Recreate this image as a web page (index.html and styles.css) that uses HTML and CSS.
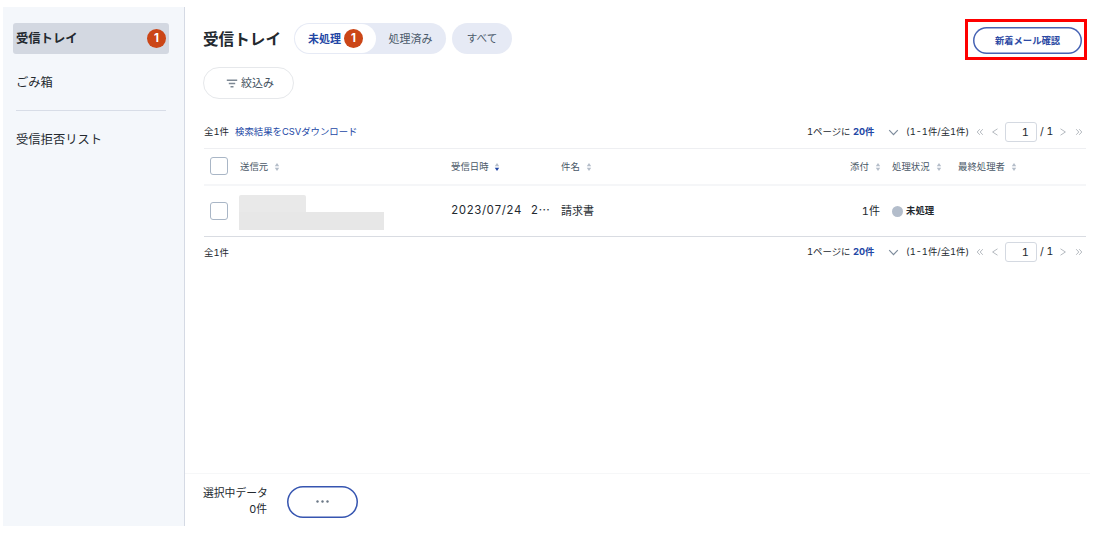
FILE: index.html
```html
<!DOCTYPE html>
<html lang="ja">
<head>
    <meta charset="UTF-8">
    <meta name="viewport" content="width=device-width, initial-scale=1.0">
    <title>受信トレイ</title>
    <link rel="stylesheet" href="styles.css">
</head>
<body>
    <svg class="sprite">
        <symbol id="sort" viewBox="0 0 6 10">
            <path fill="#b4bdc9" d="M3 1 L5.2 4.2 H0.8 Z"/>
            <path d="M3 9 L5.2 5.8 H0.8 Z"/>
        </symbol>
        <symbol id="chevron-down" viewBox="0 0 11 7">
            <path d="M1.2 1.2 L5.5 5.7 L9.8 1.2"/>
        </symbol>
        <symbol id="prev" viewBox="0 0 8 8">
            <path d="M6.5 0.8 L1.6 4 L6.5 7.2"/>
        </symbol>
        <symbol id="next" viewBox="0 0 8 8">
            <path d="M1.5 0.8 L6.4 4 L1.5 7.2"/>
        </symbol>
        <symbol id="first" viewBox="0 0 8 8">
            <path d="M3.8 1.2 L1.2 4 L3.8 6.8 M6.8 1.2 L4.2 4 L6.8 6.8"/>
        </symbol>
        <symbol id="last" viewBox="0 0 8 8">
            <path d="M1.2 1.2 L3.8 4 L1.2 6.8 M4.2 1.2 L6.8 4 L4.2 6.8"/>
        </symbol>
    </svg>
    <div class="container">
        <nav class="sidebar">
            <a class="menu active">受信トレイ<span class="badge">1</span></a>
            <a class="menu">ごみ箱</a>
            <hr>
            <a class="menu">受信拒否リスト</a>
        </nav>
        <main>
            <header>
                <h1>受信トレイ</h1>
                <div class="tabs">
                    <button class="tab selected">未処理<span class="badge">1</span></button>
                    <button class="tab">処理済み</button>
                </div>
                <button class="all">すべて</button>
                <div class="highlight">
                    <button class="check-mail">新着メール確認</button>
                </div>
            </header>
            <button class="filter">
                <svg width="12" height="9" viewBox="0 0 12 9"><path d="M0.8 1.2 H11.2 M2.8 4.5 H9.2 M4.5 7.8 H7.5"/></svg>
                絞込み
            </button>

            <div class="list-bar">
                <span class="total">全1件</span>
                <a class="csv">検索結果をCSVダウンロード</a>
                <div class="pager">
                    <span class="per">1ページに</span>
                    <b class="count">20件</b>
                    <svg class="select-arrow"><use href="#chevron-down"/></svg>
                    <span class="range">(1-1件/全1件)</span>
                    <svg class="first"><use href="#first"/></svg>
                    <svg class="prev"><use href="#prev"/></svg>
                    <span class="page">1</span>
                    <span class="pages">/ 1</span>
                    <svg class="next"><use href="#next"/></svg>
                    <svg class="last"><use href="#last"/></svg>
                </div>
            </div>

            <div class="table">
                <div class="row head">
                    <span class="checkbox"></span>
                    <span>送信元<svg class="sort"><use href="#sort"/></svg></span>
                    <span>受信日時<svg class="sort desc"><use href="#sort"/></svg></span>
                    <span>件名<svg class="sort"><use href="#sort"/></svg></span>
                    <span>添付<svg class="sort"><use href="#sort"/></svg></span>
                    <span>処理状況<svg class="sort"><use href="#sort"/></svg></span>
                    <span>最終処理者<svg class="sort"><use href="#sort"/></svg></span>
                </div>
                <div class="row data">
                    <span class="checkbox"></span>
                    <div class="sender">
                        <div class="mask-name"></div>
                        <div class="mask-address"></div>
                    </div>
                    <span class="date"><span>2023/07/24</span><span>2<i>⋯</i></span></span>
                    <span class="subject">請求書</span>
                    <span class="files">1件</span>
                    <span class="status">未処理</span>
                </div>
            </div>

            <div class="list-bar bottom">
                <span class="total">全1件</span>
                <div class="pager">
                    <span class="per">1ページに</span>
                    <b class="count">20件</b>
                    <svg class="select-arrow"><use href="#chevron-down"/></svg>
                    <span class="range">(1-1件/全1件)</span>
                    <svg class="first"><use href="#first"/></svg>
                    <svg class="prev"><use href="#prev"/></svg>
                    <span class="page">1</span>
                    <span class="pages">/ 1</span>
                    <svg class="next"><use href="#next"/></svg>
                    <svg class="last"><use href="#last"/></svg>
                </div>
            </div>

            <footer>
                <div class="selection">選択中データ<br>0件</div>
                <button class="more"><svg width="13" height="3" viewBox="0 0 13 3"><circle cx="1.5" cy="1.5" r="1.2"/><circle cx="6.5" cy="1.5" r="1.2"/><circle cx="11.5" cy="1.5" r="1.2"/></svg></button>
            </footer>
        </main>
    </div>
</body>
</html>
```

FILE: styles.css
```css
* {
    box-sizing: border-box;
}
body {
    margin: 0;
    background: #fff;
    color: #23292f;
    font-family: Inter, "Noto Sans CJK JP", sans-serif;
    font-size: 9.4px;
    font-variant-numeric: tabular-nums;
    line-height: 1;
    white-space: nowrap;
}
button {
    padding: 0;
    border: none;
    background: none;
    font-family: inherit;
    line-height: 1;
    cursor: pointer;
}
svg {
    display: block;
    flex: none;
}
.sprite {
    display: none;
}
.container {
    display: flex;
    width: 1090px;
    height: 526px;
    padding: 7px 0 0 3px;
}

/* sidebar */
.sidebar {
    flex: none;
    width: 182px;
    padding: 16px 15px 0 10px;
    background: #f4f7fb;
    border-right: 1px solid #d5dae4;
}
.menu {
    display: flex;
    align-items: center;
    justify-content: space-between;
    height: 31px;
    padding: 2px 3px 0;
    border-radius: 3px;
    font-size: 12.3px;
}
.menu.active {
    margin-bottom: 13px;
    background: #d3d8e1;
    font-weight: bold;
}
.menu .badge {
    margin-top: -2px;
}
.sidebar hr {
    height: 1px;
    margin: 12px 3px 13px;
    border: none;
    background: #d8dde7;
}
.badge {
    display: flex;
    align-items: center;
    justify-content: center;
    width: 19px;
    height: 19px;
    border-radius: 50%;
    background: #cb4617;
    color: #fff;
    font-size: 11.5px;
    font-weight: bold;
    font-variant-numeric: normal;
}

/* main */
main {
    flex: 1;
    display: flex;
    flex-direction: column;
    align-items: flex-start;
}
header {
    display: flex;
    width: 100%;
    padding: 12px 3px 0 18px;
}
h1 {
    width: 91px;
    margin: 5px 0 0;
    font-size: 15.6px;
    line-height: 31px;
}
.tabs {
    display: flex;
    width: 152px;
    height: 31px;
    margin-top: 4px;
    padding: 1px;
    border-radius: 16px;
    background: #e6eaf5;
}
.tab {
    flex: 1;
    padding-top: 2px;
    color: #4b5a6b;
    font-size: 11px;
}
.tab.selected {
    display: flex;
    flex: none;
    align-items: center;
    gap: 3px;
    width: 81px;
    padding: 2px 0 0 13px;
    border-radius: 15px;
    background: #fff;
    color: #2347a5;
    font-weight: bold;
}
.tab .badge {
    margin-top: -2px;
}
.all {
    width: 60px;
    height: 31px;
    margin: 4px 0 0 6px;
    padding-top: 2px;
    border-radius: 16px;
    background: #e6eaf5;
    color: #4b5a6b;
    font-size: 10.6px;
}
.highlight {
    width: 122px;
    height: 41px;
    margin-left: auto;
    padding: 5px;
    border: 3px solid #fe0000;
}
.check-mail {
    width: 109px;
    height: 27px;
    border-radius: 14px;
    box-shadow: inset 0 0 0 1.5px #4663b4;
    color: #2d4aa4;
    font-size: 9.3px;
    font-weight: bold;
}
.filter {
    display: flex;
    align-items: center;
    gap: 3px;
    width: 91px;
    height: 32px;
    margin: 7px 0 0 18px;
    padding: 1px 0 0 22px;
    border: 1px solid #e6e8eb;
    border-radius: 16px;
    color: #45535f;
    font-size: 11px;
}
.filter svg {
    margin-top: -1px;
    fill: none;
    stroke: #7d8894;
    stroke-width: 1.5;
}

/* count and paging */
.list-bar {
    display: flex;
    align-items: center;
    width: 882px;
    height: 32px;
    margin: 17px 0 0 19px;
}
.list-bar.bottom {
    margin-top: 0;
}
.list-bar.bottom .pager {
    margin-top: -2px;
}
.total {
    width: 31px;
}
.csv {
    color: #2347a5;
}
.pager {
    display: flex;
    align-items: center;
    width: 279px;
    margin-left: auto;
}
.pager svg {
    width: 8px;
    height: 8px;
    fill: none;
    stroke: #b5bac0;
    stroke-width: 1;
}
.per {
    width: 46px;
}
.count {
    width: 35px;
    color: #2347a5;
}
.pager .select-arrow {
    width: 11px;
    height: 7px;
    margin-right: 7px;
    stroke: #7e8c9c;
    stroke-width: 1.2;
}
.range {
    width: 70px;
}
.pager .prev {
    margin: 0 6px 0 7px;
}
.page {
    width: 32px;
    height: 20px;
    padding-right: 7px;
    border: 1px solid #d4d9e1;
    border-radius: 3px;
    font-size: 11px;
    line-height: 18px;
    text-align: right;
}
.pages {
    width: 18px;
    padding: 1px 0 0 3px;
    font-size: 10.5px;
}
.pager .next {
    margin: 0 8px 0 4px;
}

/* mail table */
.table {
    width: 882px;
    margin-left: 19px;
    border-top: 1px solid #eeeff2;
    border-bottom: 1px solid #d9dce2;
}
.row {
    display: grid;
    grid-template-columns: 36px 211px 110px 289px 42px 66px 1fr;
    align-items: center;
}
.head {
    height: 37px;
    border-bottom: 2px solid #f5f6f8;
    color: #4a5867;
}
.head > span {
    display: flex;
    align-items: center;
}
.data {
    height: 50px;
}
.checkbox {
    width: 18px;
    height: 18px;
    margin-left: 6px;
    border: 1px solid #a9b6c6;
    border-radius: 3px;
}
.head .checkbox {
    margin-top: -1px;
}
.sort {
    width: 6px;
    height: 10px;
    margin-left: 6px;
    fill: #b4bdc9;
}
.sort.desc {
    margin-left: 5px;
    fill: #2347a5;
}
.mask-name {
    width: 67px;
    height: 17px;
    border-radius: 2px 2px 0 0;
    background: #e9e9e9;
}
.mask-address {
    width: 145px;
    height: 18px;
    background: #e7e7e7;
}
.sender {
    margin: 3px 0 0 -1px;
}
.date {
    display: flex;
    gap: 9px;
    font-size: 11.4px;
    letter-spacing: 0.35px;
}
.date i {
    font-style: normal;
}
.subject {
    font-size: 11px;
}
.files {
    padding: 1px 12px 0 0;
    font-size: 11px;
    text-align: right;
}
.status {
    display: flex;
    align-items: center;
    gap: 3px;
    font-weight: bold;
}
.status::before {
    content: "";
    width: 11px;
    height: 11px;
    border-radius: 50%;
    background: #b3bdcb;
}

footer {
    display: flex;
    align-items: center;
    gap: 20px;
    width: 100%;
    height: 53px;
    margin-top: auto;
    padding: 3px 0 0 18px;
    border-top: 1px solid #f6f7f8;
}
.selection {
    width: 64px;
    padding-top: 1px;
    font-size: 10.8px;
    line-height: 16px;
    text-align: right;
}
.more {
    display: flex;
    align-items: center;
    justify-content: center;
    width: 71px;
    height: 32px;
    border-radius: 16px;
    box-shadow: inset 0 0 0 1.5px #3655b0;
    fill: #6b7886;
}
```
